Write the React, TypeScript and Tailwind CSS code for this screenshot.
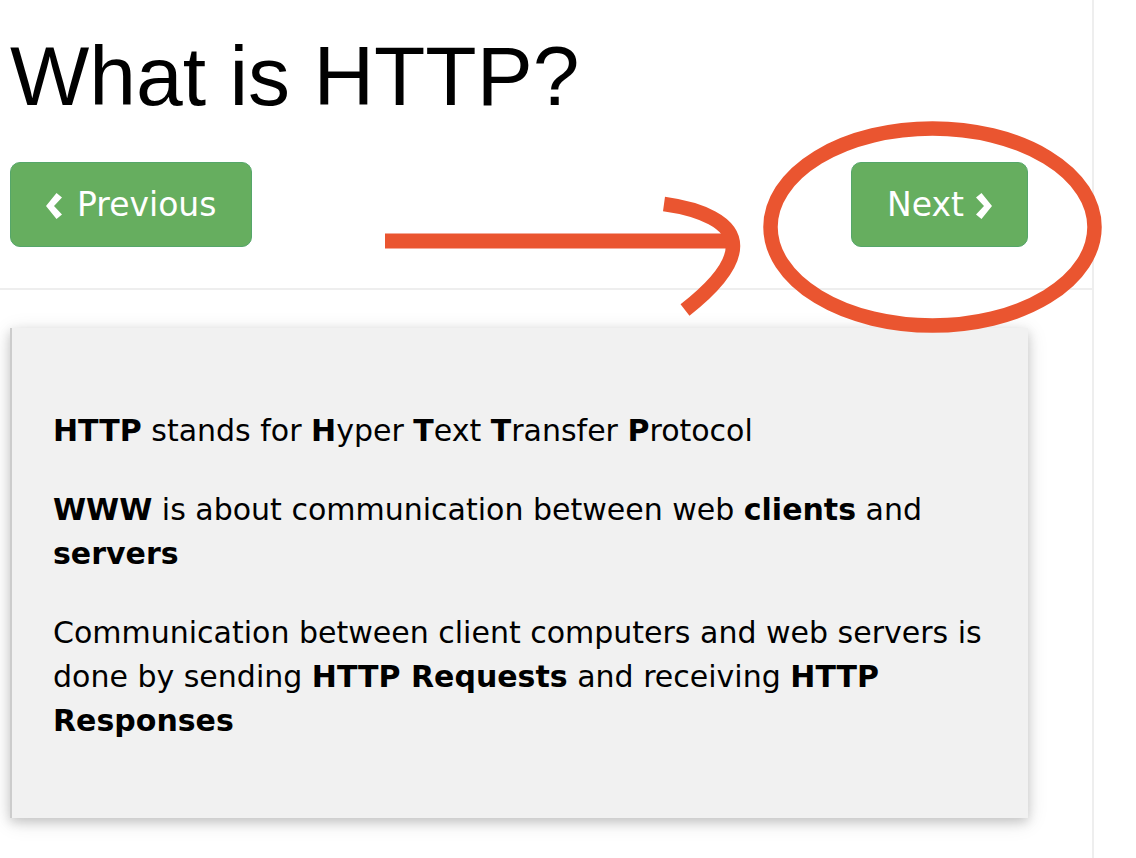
import React from "react";

const NavButton = ({ children, gap }: { children: React.ReactNode; gap: string }) => (
  <button
    className={
      "h-[85px] pl-[35px] pr-[35px] flex items-center rounded-[10px] border border-[#55a66a] bg-[#66ae5f] text-white text-[33px] font-['DejaVu_Sans',Verdana,sans-serif] " +
      gap
    }
  >
    {children}
  </button>
);

// heavy angle like the ❮ ❯ ornaments
const Chevron = ({ dir }: { dir: "left" | "right" }) => (
  <svg width="16" height="26" viewBox="0 0 16 26" className="mt-[2px]">
    {dir === "left" ? (
      <polygon points="10.5,0 16,4.5 8,13 16,21.5 10.5,26 0,13" fill="white" />
    ) : (
      <polygon points="5.5,0 0,4.5 8,13 0,21.5 5.5,26 16,13" fill="white" />
    )}
  </svg>
);

const Annotations = () => (
  <svg
    className="absolute top-0 left-0 pointer-events-none"
    width="1136"
    height="858"
    viewBox="0 0 1136 858"
    fill="none"
  >
    {/* arrow */}
    <path d="M385 241 H733" stroke="#ea5530" strokeWidth="15" />
    <path
      d="M664 204 C700 209 733 222 733 246 C733 268 708 292 685 310"
      stroke="#ea5530"
      strokeWidth="14.5"
    />
    {/* circle round the Next button */}
    <ellipse cx="932.5" cy="227" rx="162" ry="98.5" stroke="#ea5530" strokeWidth="14.5" />
  </svg>
);

const App = () => {
  return (
    <div className="relative w-[1136px] h-[858px] overflow-hidden bg-white flex">
      <div className="w-[1094px] h-full border-r-2 border-[#eeeeee] flex flex-col">
        <h1 className="pl-[10px] pt-[26px] text-[84px] leading-[100px] text-black font-['Liberation_Sans',Arial,sans-serif]">
          What is HTTP?
        </h1>

        <div className="mt-[36px] pl-[10px] w-[1028px] flex justify-between">
          <NavButton gap="gap-[15px]">
            <Chevron dir="left" />
            <span>Previous</span>
          </NavButton>
          <NavButton gap="gap-[12px]">
            <span>Next</span>
            <Chevron dir="right" />
          </NavButton>
        </div>

        <hr className="mt-[41px] border-t-2 border-[#eeeeee]" />

        <div className="ml-[10px] mt-[38px] w-[1018px] h-[490px] bg-[#f1f1f1] border-l-2 border-[#cccccc] pl-[41px] pr-[30px] pt-[81px] shadow-[0_4px_10px_0_rgba(0,0,0,0.16),0_4px_20px_0_rgba(0,0,0,0.12)] text-[30px] leading-[44px] text-black font-['DejaVu_Sans',Verdana,sans-serif]">
          <p className="mb-[35px]">
            <b>HTTP</b> stands for <b>H</b>yper <b>T</b>ext <b>T</b>ransfer <b>P</b>rotocol
          </p>
          <p className="mb-[35px]">
            <b>WWW</b> is about communication between web <b>clients</b> and <b>servers</b>
          </p>
          <p>
            Communication between client computers and web servers is done by sending{" "}
            <b>HTTP Requests</b> and receiving <b>HTTP Responses</b>
          </p>
        </div>
      </div>

      <Annotations />
    </div>
  );
};

export default App;
